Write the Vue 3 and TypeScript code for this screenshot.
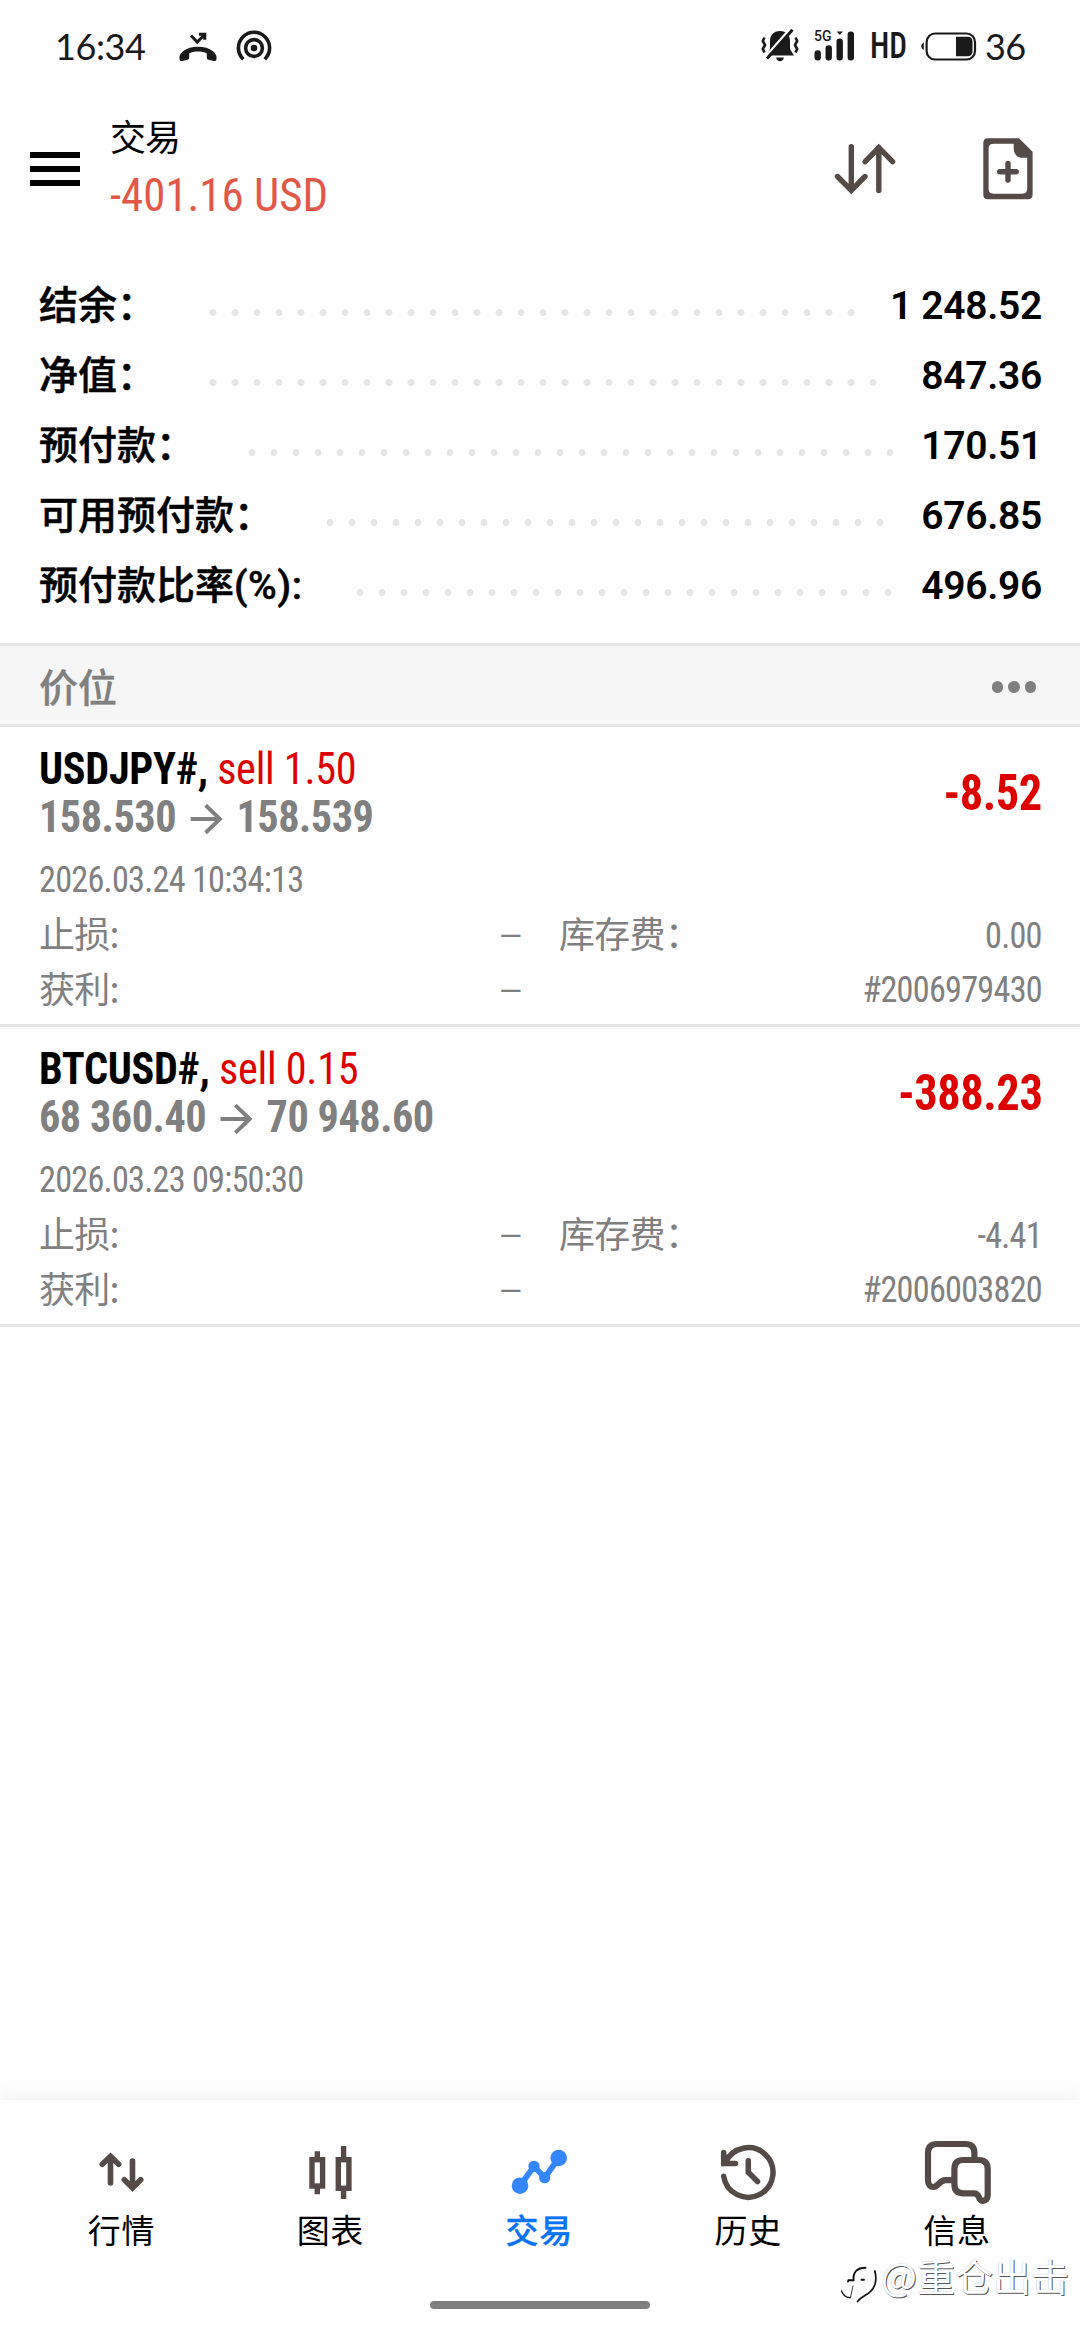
<script setup lang="ts">
interface SummaryRow {
  label: string
  unit?: string
  value: string
  dots: number
}

interface Position {
  symbol: string
  deal: string
  open: string
  current: string
  profit: string
  time: string
  swap: string
  ticket: string
}

interface Tab {
  id: string
  label: string
}

const DOT_PITCH = 22

const summary: SummaryRow[] = [
  { label: '结余：', value: '1 248.52', dots: 30 },
  { label: '净值：', value: '847.36', dots: 31 },
  { label: '预付款：', value: '170.51', dots: 30 },
  { label: '可用预付款：', value: '676.85', dots: 26 },
  { label: '预付款比率', unit: '(%):', value: '496.96', dots: 25 },
]

const positions: Position[] = [
  {
    symbol: 'USDJPY#,',
    deal: 'sell 1.50',
    open: '158.530',
    current: '158.539',
    profit: '-8.52',
    time: '2026.03.24 10:34:13',
    swap: '0.00',
    ticket: '#2006979430',
  },
  {
    symbol: 'BTCUSD#,',
    deal: 'sell 0.15',
    open: '68 360.40',
    current: '70 948.60',
    profit: '-388.23',
    time: '2026.03.23 09:50:30',
    swap: '-4.41',
    ticket: '#2006003820',
  },
]

const tabs: Tab[] = [
  { id: 'quotes', label: '行情' },
  { id: 'charts', label: '图表' },
  { id: 'trade', label: '交易' },
  { id: 'history', label: '历史' },
  { id: 'messages', label: '信息' },
]
const activeTab = 'trade'
</script>

<template>
  <div class="screen">
    <header class="status">
      <span class="clock">16:34</span>
      <svg class="missed" width="38" height="30" viewBox="0 0 38 30">
        <path d="M.6 27.5C-.2 24.5 1 21.5 4 19.2C8 16.2 13 14.8 19 14.8S30 16.2 34 19.2C37 21.5 38.2 24.5 37.4 27.5C37 29 36 29.2 34.6 28.9L29.6 27.8C28.4 27.5 27.8 26.8 27.8 25.6V21.2C25.2 20.1 22.2 19.5 19 19.5S12.800 20.1 10.200 21.200V25.600C10.200 26.800 9.600 27.500 8.400 27.800L3.400 28.900C2 29.200 1 29 .6 27.500Z" fill="#1a1a1a" />
        <path d="M12 3.500L18.200 10L25.500 2.700M20 2.200H25.800V7.800" fill="none" stroke="#1a1a1a" stroke-width="3" />
      </svg>
      <svg class="hotspot" width="36" height="32" viewBox="0 0 36 32">
        <g fill="none" stroke="#1a1a1a" stroke-width="3.600">
          <path d="M7.300 29.200A15.600 15.600 0 1 1 28.700 29.200" />
          <circle cx="18" cy="18" r="8.400" />
        </g>
        <circle cx="18" cy="18" r="3.300" fill="#1a1a1a" />
      </svg>
      <span class="grow"></span>
      <svg class="bell" width="38" height="34" viewBox="0 0 38 34">
        <path d="M19 2C12.500 2 9 6.500 9 12V20L5 26.500H33L29 20V12C29 6.500 25.500 2 19 2Z" fill="#1a1a1a" />
        <path d="M15.200 28.500H22.800C22.500 31 21 32.300 19 32.300S15.500 31 15.200 28.500Z" fill="#1a1a1a" />
        <path d="M2.500 30.500L28.500 1" stroke="#fefefe" stroke-width="3.400" />
        <path d="M6 29.500L31.500 0.800" stroke="#1a1a1a" stroke-width="3" />
        <path d="M3.500 8.500L1.800 12L4 16L1.800 20L3.500 23.500M34.500 8.500L36.200 12L34 16L36.200 20L34.500 23.500" fill="none" stroke="#1a1a1a" stroke-width="2.600" stroke-linejoin="round" />
      </svg>
      <div class="signal">
        <span class="net">5G</span>
        <svg width="41" height="30" viewBox="0 0 41 30">
          <g fill="#1a1a1a">
            <rect x="0.500" y="19.300" width="6.400" height="10.200" rx="3" />
            <rect x="11.500" y="14.300" width="6.400" height="15.200" rx="3" />
            <rect x="22.500" y="7.600" width="6.400" height="21.900" rx="3" />
            <rect x="33.600" y="0.500" width="6.400" height="29" rx="3" />
            <path d="M22.800 .5H28.800L25.800 4Z" />
          </g>
        </svg>
      </div>
      <span class="hd">HD</span>
      <svg class="battery" width="56" height="29" viewBox="0 0 56 29">
        <path d="M2.800 10.500V18C1.200 17.300 .3 16 .3 14.300S1.200 11.200 2.800 10.500Z" fill="#1a1a1a" />
        <rect x="5.600" y="1.500" width="48.400" height="26" rx="8.500" fill="none" stroke="#1a1a1a" stroke-width="2.200" />
        <path d="M35 4.700H46.500Q51.500 4.700 51.500 9.700V19.300Q51.500 24.300 46.500 24.300H35Z" fill="#1a1a1a" />
      </svg>
      <span class="level">36</span>
    </header>

    <section class="appbar">
      <div class="menu"><i></i><i></i><i></i></div>
      <div class="heading">
        <div class="title">交易</div>
        <div class="total">-401.16 USD</div>
      </div>
      <svg class="sort" width="62" height="52" viewBox="0 0 62 52">
        <g fill="none" stroke="#544a47" stroke-width="5.400" stroke-linecap="round">
          <path d="M17.300 3.800V47M3.500 33.500L17.300 47.300L31 33.500" />
          <path d="M44.800 47.500V4.500M31.200 18.700L44.800 4.700L58.600 18.700" />
        </g>
      </svg>
      <svg class="add" width="50" height="62" viewBox="0 0 50 62">
        <path fill-rule="evenodd" d="M5 .3H36L49.600 13.800V56.500Q49.600 61.300 44.800 61.300H5Q.3 61.300 .3 56.500V5Q.3 .3 5 .3ZM10.500 5.800Q5.600 5.800 5.600 10.500V50.800Q5.600 55.700 10.500 55.700H39.300Q44.200 55.700 44.200 50.800V19.800H40.500Q30.700 19.800 30.700 10V5.800Z" fill="#544a47" />
        <path d="M25 25.500V42M16.700 33.700H33.200" stroke="#544a47" stroke-width="5.400" stroke-linecap="round" />
      </svg>
    </section>

    <section class="summary">
      <div v-for="row in summary" :key="row.label" class="row">
        <span class="name">{{ row.label }}<span v-if="row.unit" class="unit">{{ row.unit }}</span></span>
        <span class="leader" :style="{ width: row.dots * DOT_PITCH + 'px' }"></span>
        <span class="amount">{{ row.value }}</span>
      </div>
    </section>

    <section class="bar">
      <span>价位</span>
      <div class="more"><i></i><i></i><i></i></div>
    </section>

    <article v-for="p in positions" :key="p.ticket" class="position">
      <div class="top">
        <div>
          <div class="line"><b>{{ p.symbol }}</b> <span class="deal">{{ p.deal }}</span></div>
          <div class="line prices">
            <span>{{ p.open }}</span>
            <svg width="33" height="30" viewBox="0 0 33 30">
              <path d="M0 15H30.500M15.500 1.300L30.500 15L15.500 28.700" fill="none" stroke="#808080" stroke-width="3.900" />
            </svg>
            <span>{{ p.current }}</span>
          </div>
        </div>
        <span class="profit">{{ p.profit }}</span>
      </div>
      <div class="time">{{ p.time }}</div>
      <div class="details">
        <div class="pair"><span class="cjk">止损:</span><span class="cjk none">–</span></div>
        <div class="pair"><span class="cjk">库存费：</span><span class="figure">{{ p.swap }}</span></div>
        <div class="pair"><span class="cjk">获利:</span><span class="cjk none">–</span></div>
        <div class="pair end"><span class="figure">{{ p.ticket }}</span></div>
      </div>
    </article>

    <div class="spacer"></div>

    <nav class="tabs">
      <div v-for="t in tabs" :key="t.id" class="tab" :class="{ active: t.id === activeTab }">
        <svg width="60" height="60" viewBox="0 0 60 60">
          <g v-if="t.id === 'quotes'" fill="none" stroke="#544a47" stroke-width="5.600" stroke-linecap="round">
            <path d="M19.500 41V14.500M11.300 22.300L19.500 14.300L27.700 22.300" />
            <path d="M41.500 19V45.500M33.300 37.800L41.500 45.800L49.700 37.800" />
          </g>
          <g v-else-if="t.id === 'charts'" fill="none" stroke="#544a47" stroke-width="5.400">
            <rect x="12" y="17.700" width="10.600" height="26.300" />
            <path d="M17.300 9.300V16M17.300 46V52.200" />
            <rect x="38.300" y="17.700" width="10.600" height="28.600" />
            <path d="M43.600 4V16M43.600 48V57" />
          </g>
          <g v-else-if="t.id === 'trade'" fill="#3585ff">
            <path d="M11 43.700L25 24.300L35.700 35.700L49.700 16" fill="none" stroke="#3585ff" stroke-width="5.800" />
            <circle cx="11" cy="43.700" r="8.300" />
            <circle cx="25" cy="24.300" r="5.600" />
            <circle cx="35.700" cy="35.700" r="5.600" />
            <circle cx="49.700" cy="16" r="8.300" />
          </g>
          <g v-else-if="t.id === 'history'" fill="none" stroke="#544a47" stroke-width="5.500" stroke-linecap="round">
            <path d="M5.700 34.300A24.800 24.800 0 1 0 7.500 20.500" />
            <path d="M5.700 10.500V21.500H17.500M5.700 21.500L10 15.500" />
            <path d="M30.300 18.800V30.300L39.500 39.500" />
          </g>
          <g v-else fill="none" stroke="#544a47" stroke-width="6.200" stroke-linejoin="round">
            <path d="M47.400 18V11Q47.400 2 38.400 2H10Q1 2 1 11V38.500C1 43 3.500 45 6.300 45C11.500 45 12 38.200 18.500 38.200H27.400" />
            <path d="M36.400 18H51.700Q60.700 18 60.700 27V53C60.700 57 58.500 58.800 56 58.800C50.500 58.800 53.500 51.300 47 51.300H36.400Q27.400 51.300 27.400 42.300V27Q27.400 18 36.400 18Z" />
          </g>
        </svg>
        <span>{{ t.label }}</span>
      </div>
    </nav>
    <div class="home"></div>

    <div class="mark">
      <svg width="40" height="42" viewBox="0 0 40 42">
        <g fill="none" stroke="#111" stroke-linecap="round">
          <path d="M8 23.500L8.500 22.300H13.500C13 14 17 9.700 25.500 9.700" stroke-width="1.900" />
          <path d="M21.500 21.700H24" stroke-width="1.900" />
          <path d="M34.800 13C36.800 20 35.800 28 31 33C27 37.500 21.500 38 17.500 43.500" stroke-width="1.800" />
          <path d="M1.500 33C3.500 38 6 40 10.500 39.500" stroke-width="1.300" />
          <path d="M10.500 39.500L13 28" stroke-width="1" stroke="#444" />
        </g>
      </svg>
      <span>@重仓出击</span>
    </div>
  </div>
</template>

<style>
body {
  margin: 0;
  background: #fefefe;
}
</style>

<style scoped>
.screen {
  position: relative;
  display: flex;
  flex-direction: column;
  width: 1080px;
  height: 2340px;
  overflow: hidden;
  background: #fefefe;
  color: #000;
  font-family: Roboto, "Noto Sans CJK SC", sans-serif;
}
svg {
  display: block;
  flex: none;
  overflow: visible;
}
.status {
  display: flex;
  align-items: center;
  height: 92px;
  padding: 0 54px 0 55px;
  color: #1a1a1a;
}
.clock,
.level {
  font: 36px/44px Lato, sans-serif;
}
.clock {
  width: 124px;
  letter-spacing: -0.400px;
}
.missed {
  margin-top: 2px;
}
.hotspot {
  margin-left: 18.500px;
  margin-top: -1px;
}
.grow {
  flex: 1;
}
.bell {
  margin-right: 15px;
}
.signal {
  position: relative;
  margin-right: 15px;
}
.net {
  position: absolute;
  left: 0;
  top: -1px;
  font: 500 14px/12px Roboto, sans-serif;
}
.hd {
  width: 51px;
  font-size: 36px;
  font-weight: 500;
  font-stretch: 75%;
  line-height: 44px;
  transform: scaleX(0.87);
  transform-origin: left;
}
.battery {
  margin-right: 8px;
}
.level {
  width: 41px;
  letter-spacing: -0.600px;
}
.appbar {
  display: flex;
  height: 179px;
}
.menu {
  display: flex;
  flex-direction: column;
  gap: 8px;
  width: 50px;
  margin: 60px 30px 0;
}
.menu i {
  height: 6px;
  background: #000;
}
.heading {
  flex: 1;
  padding-top: 15px;
}
.title {
  font: 36px/57px "Noto Sans CJK SC", sans-serif;
  letter-spacing: -1px;
}
.total {
  font-size: 46px;
  font-stretch: 75%;
  line-height: 63px;
  color: #e25848;
  transform: scaleX(0.975);
  transform-origin: left;
}
.sort {
  margin: 51px 87px 0 0;
}
.add {
  margin: 46px 47px 0 0;
}
.summary {
  height: 372px;
}
.row {
  display: flex;
  align-items: center;
  height: 70px;
  padding: 0 38px 0 39px;
  font-size: 39px;
  font-weight: 500;
  line-height: 70px;
}
.name {
  -webkit-text-stroke: 0.500px #000;
}
.unit {
  letter-spacing: 0.600px;
}
.leader {
  height: 7px;
  margin: 13px 0 0 46px;
  background: radial-gradient(circle at center, #e6e6e6 3.100px, transparent 3.800px) 0 0 / 22px 7px repeat-x;
}
.amount {
  margin-left: auto;
  font-weight: 650;
  letter-spacing: -0.300px;
}
.bar {
  display: flex;
  align-items: center;
  justify-content: space-between;
  box-sizing: border-box;
  height: 84px;
  padding: 0 44px 0 39px;
  border-top: 3px solid #e6e6e6;
  border-bottom: 3px solid #e6e6e6;
  background: #f6f6f6;
  color: #808080;
  font: 500 39px/72px "Noto Sans CJK SC", sans-serif;
}
.bar span {
  -webkit-text-stroke: 0.300px #808080;
}
.more {
  display: flex;
  gap: 5px;
  margin-top: 4px;
}
.more i {
  width: 11.500px;
  height: 11.500px;
  border-radius: 50%;
  background: #808080;
}
.position {
  box-sizing: border-box;
  height: 300px;
  padding: 18px 38px 0 39px;
  border-bottom: 3px solid #e6e6e6;
  color: #808080;
}
.top {
  display: flex;
  align-items: center;
  justify-content: space-between;
  height: 96px;
  font-stretch: 75%;
}
.line {
  height: 48px;
  font-size: 44px;
  line-height: 48px;
  letter-spacing: -0.300px;
  transform: scaleX(0.96);
  transform-origin: left;
}
.line b {
  color: #000;
}
.deal {
  color: #dc0000;
}
.prices {
  display: flex;
  align-items: center;
  gap: 15px;
  font-weight: 700;
  letter-spacing: -0.500px;
}
.prices svg {
  margin-top: 3px;
}
.profit {
  font-size: 50px;
  font-weight: 700;
  letter-spacing: -0.500px;
  color: #dc0000;
  transform: scaleX(0.93);
  transform-origin: right;
}
.time,
.details {
  font-size: 36px;
  font-stretch: 75%;
  line-height: 55px;
  letter-spacing: -0.770px;
}
.time {
  margin-top: 12px;
  transform: scaleX(0.95);
  transform-origin: left;
}
.figure {
  transform: scaleX(0.95);
  transform-origin: right;
}
.details {
  display: grid;
  grid-template-columns: 481px 1fr;
  column-gap: 39px;
}
.pair {
  display: flex;
  align-items: baseline;
  justify-content: space-between;
  height: 55px;
}
.pair.end {
  justify-content: flex-end;
}
.cjk {
  font-family: "Noto Sans CJK SC", sans-serif;
  font-stretch: 100%;
  line-height: 48px;
  letter-spacing: -0.700px;
}
.none {
  transform: translate(2px, -2px) scaleX(1.2);
  transform-origin: right;
}
.spacer {
  flex: 1;
}
.tabs {
  display: flex;
  box-sizing: border-box;
  height: 240px;
  padding: 42px 18.500px 0 17px;
  background: #fefefe;
  box-shadow: 0 0 20px rgba(0, 0, 0, 0.08);
}
.tab {
  display: flex;
  flex: 1;
  flex-direction: column;
  align-items: center;
}
.tab span {
  margin-top: 5px;
  font: 33px/44px "Noto Sans CJK SC", sans-serif;
  letter-spacing: 0.700px;
}
.tab.active span {
  font-weight: 500;
  color: #0a73f5;
  -webkit-text-stroke: 0.300px #0a73f5;
}
.home {
  position: absolute;
  left: 430px;
  top: 2301px;
  width: 220px;
  height: 8px;
  border-radius: 4px;
  background: #808080;
}
.mark {
  position: absolute;
  left: 840px;
  top: 2258px;
  display: flex;
  align-items: flex-start;
}
.mark span {
  margin: -4px 0 0 1px;
  font: 38px/42px "Noto Sans CJK SC", sans-serif;
  white-space: nowrap;
  color: #fff;
  text-shadow: 1px 1px 0 #555, 0 0 1px #aaa;
}
</style>
